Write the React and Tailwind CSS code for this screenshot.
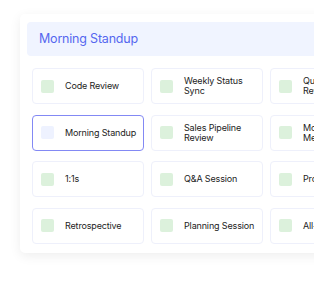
const items = [
  { label: "Code Review" },
  { label: ["Weekly Status", "Sync"] },
  { label: ["Quarterly", "Review"] },
  { label: "Morning Standup", selected: true },
  { label: ["Sales Pipeline", "Review"] },
  { label: ["Monthly", "Metrics"] },
  { label: "1:1s" },
  { label: "Q&A Session" },
  { label: "Product Demo" },
  { label: "Retrospective" },
  { label: "Planning Session" },
  { label: "All-Hands" },
];

const Item = ({ label, selected }) => {
  const lines = Array.isArray(label) ? label : [label];
  return (
    <div
      className={
        selected
          ? "h-[36px] flex items-center pl-[8px] rounded-[4px] border border-[#8389f4] bg-white"
          : "h-[36px] flex items-center pl-[8px] rounded-[4px] border border-[#eef0fb] bg-white"
      }
    >
      <div
        className={
          selected
            ? "w-[13px] h-[13px] shrink-0 rounded-[2px] bg-[#eef2ff]"
            : "w-[13px] h-[13px] shrink-0 rounded-[2px] bg-[#dcf1dc]"
        }
      />
      <div className="ml-[11px] text-[9px] leading-[10px] tracking-[-0.15px] text-[#1c1c1c] whitespace-nowrap">
        {lines.map((l) => (
          <div key={l}>{l}</div>
        ))}
      </div>
    </div>
  );
};

const App = () => {
  return (
    <div
      className="w-[314px] h-[288px] overflow-hidden bg-white pt-[14px] pl-[20px]"
      style={{ fontFamily: "Inter, 'Open Sans', sans-serif" }}
    >
      <div className="w-[376px] rounded-[5px] bg-white shadow-[0_3px_12px_rgba(0,0,0,0.07)] px-[7px] pt-[8px] pb-[9px]">
        <div className="h-[34px] rounded-[4px] bg-[#f0f4ff] flex items-center pl-[12px] text-[12.5px] tracking-[-0.2px] text-[#5567ef]">
          Morning Standup
        </div>
        <div className="mt-[12px] px-[5px] grid grid-cols-[112px_112px_112px] gap-x-[7px] gap-y-[10.5px]">
          {items.map((it, i) => (
            <Item key={i} {...it} />
          ))}
        </div>
      </div>
    </div>
  );
};

export default App;
